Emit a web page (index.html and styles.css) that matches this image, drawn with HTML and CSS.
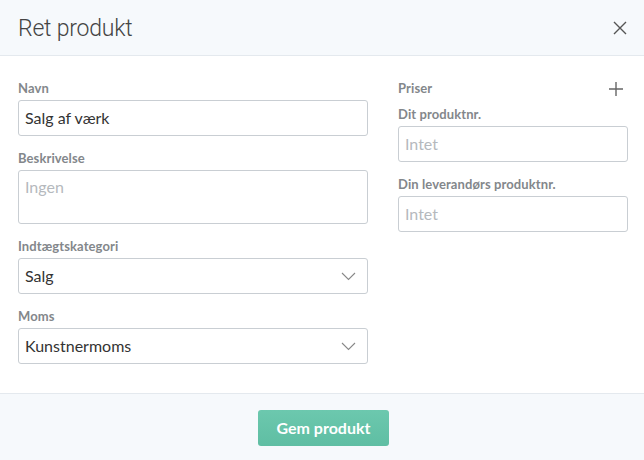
FILE: index.html
```html
<!DOCTYPE html>
<html lang="da">
<head>
<meta charset="utf-8">
<title>Ret produkt</title>
<link rel="stylesheet" href="styles.css">
</head>
<body>
<div class="modal">
  <header class="head">
    <h1 class="title">Ret produkt</h1>
    <button class="close" aria-label="Luk">
      <svg width="14" height="14" viewBox="0 0 14 14"><path d="M1 1L13 13M13 1L1 13" stroke="#555" stroke-width="1.4" fill="none"/></svg>
    </button>
  </header>
  <main class="body">
    <section class="col left">
      <div class="field">
        <label class="label">Navn</label>
        <div class="input">Salg af værk</div>
      </div>
      <div class="field">
        <label class="label">Beskrivelse</label>
        <div class="input area placeholder">Ingen</div>
      </div>
      <div class="field">
        <label class="label">Indtægtskategori</label>
        <div class="input select">Salg
          <svg class="chev" width="15" height="9" viewBox="0 0 15 9"><path d="M1 1L7.5 7.5L14 1" stroke="#888" stroke-width="1.1" fill="none"/></svg>
        </div>
      </div>
      <div class="field">
        <label class="label">Moms</label>
        <div class="input select">Kunstnermoms
          <svg class="chev" width="15" height="9" viewBox="0 0 15 9"><path d="M1 1L7.5 7.5L14 1" stroke="#888" stroke-width="1.1" fill="none"/></svg>
        </div>
      </div>
    </section>
    <section class="col right">
      <div class="priser">
        <span class="label">Priser</span>
        <svg width="14" height="14" viewBox="0 0 14 14"><path d="M7 0V14M0 7H14" stroke="#666" stroke-width="1.4" fill="none"/></svg>
      </div>
      <div class="field">
        <label class="label">Dit produktnr.</label>
        <div class="input placeholder">Intet</div>
      </div>
      <div class="field">
        <label class="label">Din leverandørs produktnr.</label>
        <div class="input placeholder">Intet</div>
      </div>
    </section>
  </main>
  <footer class="foot">
    <button class="save">Gem produkt</button>
  </footer>
</div>
</body>
</html>
```
FILE: styles.css
```css
* { box-sizing: border-box; }
html, body { margin: 0; padding: 0; }
body {
  width: 644px;
  height: 460px;
  overflow: hidden;
  background: #fff;
  font-family: Lato, "Open Sans", sans-serif;
  color: #333;
}
.modal { display: flex; flex-direction: column; height: 460px; }
.head {
  height: 56px;
  background: #f6f9fc;
  border-bottom: 1px solid #e4e9ee;
  display: flex;
  align-items: center;
  justify-content: space-between;
  padding: 1px 17px 0 18px;
}
.title {
  margin: 0;
  font-family: Roboto, sans-serif;
  font-weight: 300;
  font-size: 23px;
  color: #444;
  letter-spacing: -0.2px;
}
.close {
  border: 0;
  background: none;
  padding: 0;
  width: 14px;
  height: 14px;
  display: flex;
}
.body {
  flex: 1;
  display: flex;
  gap: 30px;
  padding: 22px 16px 0 18px;
}
.col { display: flex; flex-direction: column; }
.left { width: 350px; }
.right { width: 230px; }
.field { display: flex; flex-direction: column; margin-bottom: 12px; }
.label {
  font-size: 13px;
  font-weight: 700;
  color: #83878b;
  line-height: 16px;
  padding-top: 2px;
  margin-bottom: 4px;
  letter-spacing: 0.1px;
}
.input {
  height: 36px;
  border: 1px solid #c9ced3;
  border-radius: 3px;
  padding: 0 6px;
  font-size: 16px;
  color: #333;
  display: flex;
  align-items: center;
  line-height: 20px;
}
.area {
  height: 54px;
  align-items: flex-start;
  padding-top: 6px;
}
.placeholder { color: #b5b9bd; }
.select { justify-content: space-between; padding-right: 11px; }
.chev { flex: none; margin-top: 1px; }
.priser {
  display: flex;
  justify-content: space-between;
  align-items: center;
  padding-right: 5px;
  margin-bottom: 8px;
}
.priser .label { margin-bottom: 0; }
.priser svg { margin-top: 4px; }
.foot {
  height: 67px;
  background: #f6f9fc;
  border-top: 1px solid #e4e9ee;
  display: flex;
  justify-content: center;
  align-items: center;
  padding: 1px 0 0 3px;
}
.save {
  width: 131px;
  height: 36px;
  border: 0;
  border-radius: 3px;
  background: linear-gradient(#6cc8ae, #5fbea3);
  color: #fff;
  font-family: Lato, sans-serif;
  font-weight: 700;
  font-size: 16px;
}
```
